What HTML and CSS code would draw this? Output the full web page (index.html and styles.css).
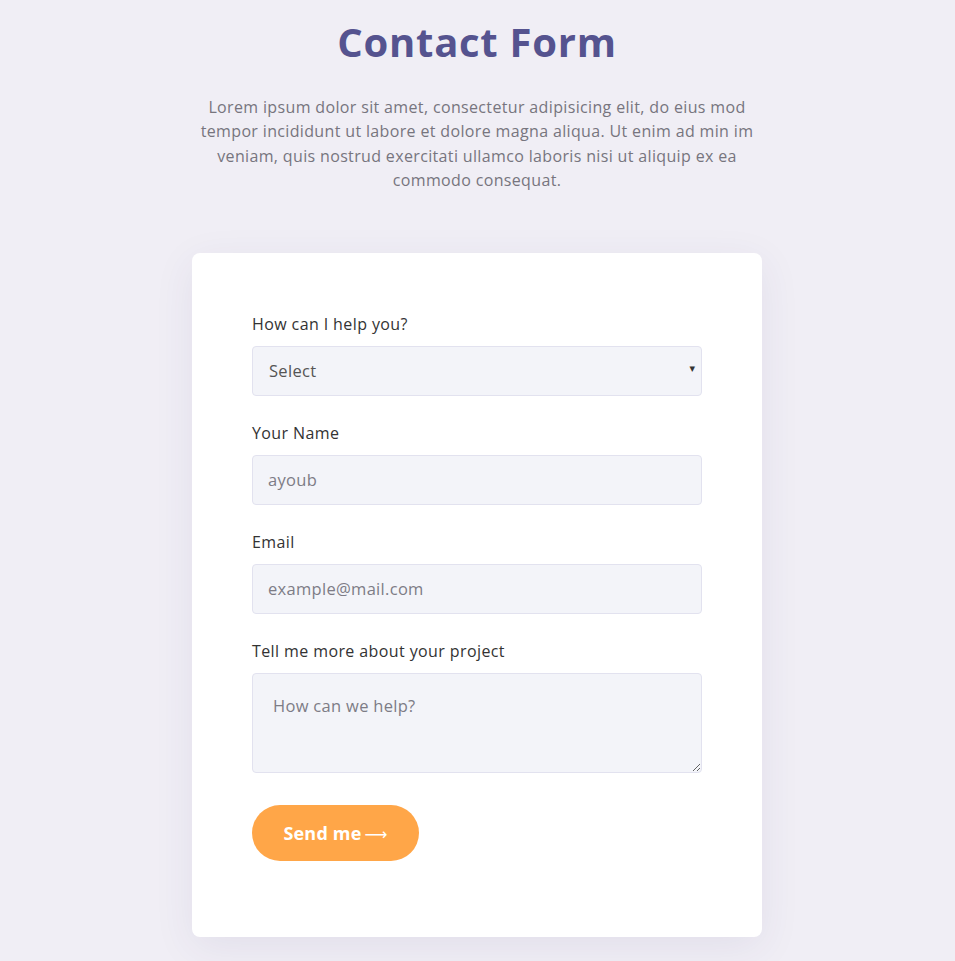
FILE: index.html
```html
<!DOCTYPE html>
<html lang="en">
<head>
<meta charset="utf-8">
<title>Contact Form</title>
<link rel="stylesheet" href="styles.css">
</head>
<body>
<main class="page">
  <header class="intro">
    <h1 class="title">Contact Form</h1>
    <p class="lead">Lorem ipsum dolor sit amet, consectetur adipisicing elit, do eius mod tempor incididunt ut labore et dolore magna aliqua. Ut enim ad min im veniam, quis nostrud exercitati ullamco laboris nisi ut aliquip ex ea commodo consequat.</p>
  </header>
  <form class="card">
    <div class="field">
      <label class="label" for="help">How can I help you?</label>
      <div class="select-wrap">
        <select id="help" class="control select">
          <option>Select</option>
        </select>
        <span class="caret">▾</span>
      </div>
    </div>
    <div class="field">
      <label class="label" for="name">Your Name</label>
      <input id="name" class="control" type="text" placeholder="ayoub">
    </div>
    <div class="field">
      <label class="label" for="email">Email</label>
      <input id="email" class="control" type="email" placeholder="example@mail.com">
    </div>
    <div class="field">
      <label class="label" for="msg">Tell me more about your project</label>
      <textarea id="msg" class="control area" placeholder="How can we help?"></textarea>
    </div>
    <button class="send" type="button">Send me <span class="arrow">⟶</span></button>
  </form>
</main>
</body>
</html>
```
FILE: styles.css
```css
* { box-sizing: border-box; }
html, body { margin: 0; padding: 0; }
body {
  background: #f0eef5;
  font-family: "Open Sans", "DejaVu Sans", sans-serif;
  color: #333;
}
.page {
  display: flex;
  flex-direction: column;
  align-items: center;
  padding: 14px 1px 24px 0;
}
.intro {
  width: 590px;
  text-align: center;
}
.title {
  margin: 0;
  font-size: 40px;
  line-height: 56px;
  font-weight: 700;
  letter-spacing: 0.75px;
  color: #55538f;
}
.lead {
  margin: 25px 0 0;
  font-size: 16px;
  letter-spacing: 0.35px;
  line-height: 24.4px;
  color: #77757e;
}
.card {
  margin-top: 60px;
  width: 570px;
  background: #fff;
  border-radius: 8px;
  box-shadow: 0 10px 40px rgba(60, 50, 110, 0.08);
  padding: 59px 60px 76px;
  display: flex;
  flex-direction: column;
  gap: 25px;
}
.field {
  display: flex;
  flex-direction: column;
  gap: 10px;
}
.label {
  font-size: 16px;
  letter-spacing: 0.4px;
  line-height: 24px;
  color: #333;
}
.control {
  width: 100%;
  height: 50px;
  border: 1px solid #e2e2ef;
  border-radius: 4px;
  background: #f3f4f9;
  padding: 0 15px;
  font-family: inherit;
  font-size: 16.5px;
  letter-spacing: 0.3px;
  color: #555;
  outline: none;
}
.control::placeholder { color: #7d7c86; }
.select-wrap { position: relative; }
.select {
  appearance: none;
  -webkit-appearance: none;
  padding-left: 16px;
  color: #555;
}
.caret {
  position: absolute;
  right: 7px;
  top: 14px;
  font-size: 11px;
  color: #333;
  pointer-events: none;
}
.area {
  height: 100px;
  padding: 20px 20px;
  resize: vertical;
  line-height: 24px;
}
.send {
  margin-top: 7px;
  align-self: flex-start;
  width: 167px;
  height: 56px;
  border: none;
  border-radius: 28px;
  background: #ffa648;
  color: #fff;
  font-family: inherit;
  font-size: 18px;
  letter-spacing: 0.2px;
  font-weight: 700;
  cursor: pointer;
}
.arrow {
  font-family: "DejaVu Sans", sans-serif;
  font-weight: 400;
  font-size: 16px;
  margin-left: -2px;
}
```
